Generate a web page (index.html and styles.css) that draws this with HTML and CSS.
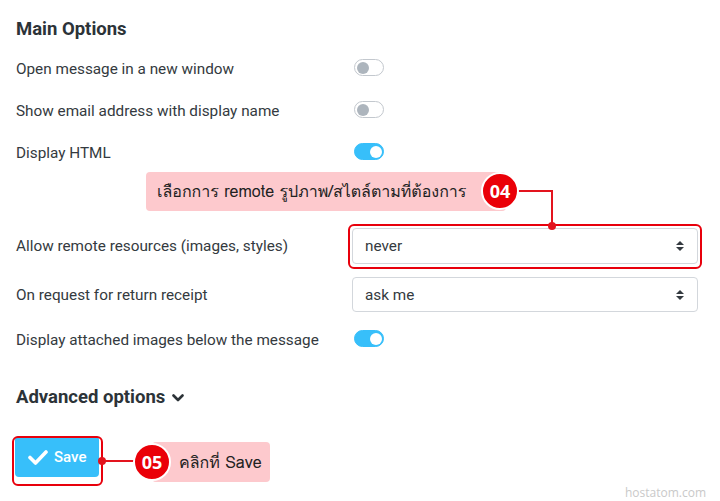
FILE: index.html
```html
<!DOCTYPE html>
<html>
<head>
<meta charset="utf-8">
<link rel="stylesheet" href="styles.css">
</head>
<body>
<div class="page">
  <h2 class="title">Main Options</h2>
  <div class="row">
    <span class="label">Open message in a new window</span>
    <span class="toggle"><span class="knob"></span></span>
  </div>
  <div class="row">
    <span class="label">Show email address with display name</span>
    <span class="toggle"><span class="knob"></span></span>
  </div>
  <div class="row">
    <span class="label">Display HTML</span>
    <span class="toggle on"><span class="knob"></span></span>
  </div>
  <div class="row sel-row first-sel">
    <span class="label">Allow remote resources (images, styles)</span>
    <div class="select"><span>never</span><svg class="arrows" width="10" height="14" viewBox="0 0 10 14"><path d="M1 6 L5 2 L9 6 Z M1 8 L5 12 L9 8 Z" fill="#343a40"/></svg></div>
  </div>
  <div class="row sel-row second-sel">
    <span class="label">On request for return receipt</span>
    <div class="select"><span>ask me</span><svg class="arrows" width="10" height="14" viewBox="0 0 10 14"><path d="M1 6 L5 2 L9 6 Z M1 8 L5 12 L9 8 Z" fill="#343a40"/></svg></div>
  </div>
  <div class="row last-row">
    <span class="label">Display attached images below the message</span>
    <span class="toggle on"><span class="knob"></span></span>
  </div>
  <h2 class="adv">Advanced options <svg width="12" height="10" viewBox="0 0 12 10"><path d="M1.5 2.5 L6 7 L10.5 2.5" fill="none" stroke="#2c3338" stroke-width="2.6" stroke-linecap="round" stroke-linejoin="round"/></svg></h2>
  <div class="actions">
    <button class="save"><svg width="20" height="16" viewBox="0 0 20 16"><path d="M2 8.5 L7.5 14 L18 3" fill="none" stroke="#fff" stroke-width="3.6" stroke-linecap="round" stroke-linejoin="round"/></svg>Save</button>
  </div>

  <!-- annotation overlays -->
  <div class="callout c04">เลือกการ remote รูปภาพ/สไตล์ตามที่ต้องการ</div>
  <div class="badge b04">04</div>
  <div class="line l04h"></div>
  <div class="line l04v"></div>
  <div class="dot d04"></div>
  <div class="frame f04"></div>

  <div class="frame f05"></div>
  <div class="line l05h"></div>
  <div class="dot d05"></div>
  <div class="callout c05">คลิกที่ Save</div>
  <div class="badge b05">05</div>

  <div class="wm">hostatom.com</div>
</div>
</body>
</html>
```

FILE: styles.css
```css
* { box-sizing: border-box; }
html, body { margin: 0; padding: 0; background: #fff; }
body {
  font-family: Roboto, "Liberation Sans", sans-serif;
  color: #2f353b;
  width: 720px;
  height: 501px;
  overflow: hidden;
}
.page {
  position: relative;
  width: 720px;
  height: 501px;
  padding: 17px 22px 0 16px;
}
.title {
  margin: 0;
  font-size: 18.5px;
  font-weight: 700;
  line-height: 24px;
  color: #2c3338;
}
.row {
  display: grid;
  grid-template-columns: 338px 1fr;
  align-items: center;
  height: 42px;
}
.row:nth-of-type(1) { margin-top: 7px; }
.label {
  font-size: 15.3px;
  line-height: 20px;
  color: #343a40;
}
.toggle {
  position: relative;
  display: block;
  width: 30px;
  height: 17px;
  margin-top: -3px;
  border: 1px solid #c3c8ce;
  border-radius: 9px;
  background: #fff;
}
.toggle .knob {
  position: absolute;
  left: 2px;
  top: 1.5px;
  width: 12px;
  height: 12px;
  border-radius: 50%;
  background: #adb5bd;
}
.toggle.on {
  background: #37bffa;
  border-color: #37bffa;
}
.toggle.on .knob {
  left: auto;
  right: 1.5px;
  background: #fff;
}
.sel-row { height: 38px; }
.first-sel { margin-top: 53px; }
.second-sel { margin-top: 11px; height: 37px; }
.last-row { margin-top: 6px; }
.select {
  display: flex;
  align-items: center;
  justify-content: space-between;
  width: 346px;
  height: 36px;
  margin-left: -2px;
  padding: 0 12px 0 12px;
  border: 1px solid #d3d7dc;
  border-radius: 4px;
  font-size: 15.3px;
  color: #343a40;
  background: #fff;
}
.second-sel .select { height: 35px; }
.adv {
  margin: 24px 0 0 0;
  font-size: 18.5px;
  font-weight: 700;
  line-height: 24px;
  color: #2c3338;
  display: flex;
  align-items: center;
  gap: 7px;
}
.adv svg { margin-top: 1px; }
.actions { margin-top: 27px; }
.save {
  display: flex;
  align-items: center;
  gap: 6px;
  width: 84px;
  height: 41px;
  margin-left: -1px;
  padding: 0 0 0 13px;
  border: none;
  border-radius: 4px;
  background: #37bffa;
  color: #fff;
  font-family: Roboto, "Liberation Sans", sans-serif;
  font-size: 15px;
  font-weight: 500;
}

/* annotations */
.callout {
  position: absolute;
  background: #fdc9cd;
  border-radius: 4px;
  font-family: "Tahoma", "Loma", "Garuda", "Norasi", "Noto Sans Thai", "Noto Sans", "DejaVu Sans", sans-serif;
  font-size: 16px;
  color: #222;
  display: flex;
  align-items: center;
  white-space: nowrap;
}
.c04 { left: 146px; top: 172px; width: 360px; height: 39px; padding-left: 11px; }
.c05 { left: 152px; top: 442px; width: 118px; height: 40px; padding-left: 27px; }
.badge {
  position: absolute;
  width: 38px;
  height: 38px;
  border-radius: 50%;
  background: #ea0008;
  border: 2px solid #fff;
  color: #fff;
  font-family: "Open Sans", Roboto, sans-serif;
  font-weight: 700;
  font-size: 18px;
  display: flex;
  align-items: center;
  justify-content: center;
  z-index: 2;
}
.b04 { left: 481px; top: 172px; }
.b05 { left: 133px; top: 443px; }
.line { position: absolute; background: #e3141e; z-index: 1; }
.l04h { left: 515px; top: 190px; width: 38px; height: 2px; }
.l04v { left: 551px; top: 190px; width: 2px; height: 36px; }
.dot {
  position: absolute;
  width: 8px;
  height: 8px;
  border-radius: 50%;
  background: #e3141e;
  z-index: 3;
}
.d04 { left: 548px; top: 222px; }
.frame {
  position: absolute;
  border: 2px solid #e8000c;
  border-radius: 6px;
}
.f04 { left: 348px; top: 224px; width: 354px; height: 45px; }
.f05 { left: 12px; top: 436px; width: 91px; height: 50px; }
.l05h { left: 102px; top: 460px; width: 36px; height: 2px; }
.d05 { left: 98px; top: 457px; }
.wm {
  position: absolute;
  right: 14px;
  top: 486px;
  line-height: 14px;
  font-family: "Open Sans", "DejaVu Sans", sans-serif;
  font-size: 12px;
  color: #c9c9c9;
}
```
